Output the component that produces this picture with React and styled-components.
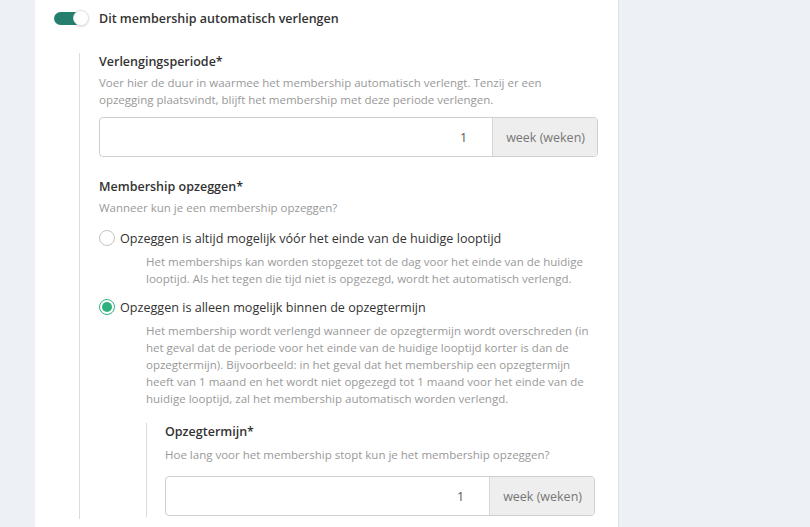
import styled, { createGlobalStyle } from "styled-components";

const Global = createGlobalStyle`
  html, body {
    margin: 0;
    padding: 0;
    background: #edf0f4;
  }
  body {
    font-family: "Open Sans", "Liberation Sans", sans-serif;
    -webkit-font-smoothing: antialiased;
  }
`;

const Page = styled.div`
  display: flex;
  height: 527px;
  overflow: hidden;
  background: #edf0f4;
`;

const Panel = styled.div`
  box-sizing: border-box;
  width: 584px;
  margin-left: 35px;
  padding: 9px 20px 0 19px;
  background: #fff;
  border-right: 1px solid #dcdfe3;
`;

const ToggleRow = styled.label`
  display: flex;
  align-items: center;
  gap: 10px;
  height: 18px;
  font-size: 12.5px;
  font-weight: 600;
  color: #333;
`;

const Switch = styled.span`
  display: inline-flex;
  align-items: center;
  width: 35px;
`;

const Track = styled.span`
  width: 28px;
  height: 13px;
  border-radius: 7px;
  background: #267e6e;
`;

const Knob = styled.span`
  box-sizing: border-box;
  width: 16px;
  height: 16px;
  margin-left: -9px;
  border-radius: 50%;
  background: #fff;
  border: 1px solid #e2e2e2;
  box-shadow: 0 1px 2px rgba(0, 0, 0, 0.12);
`;

const Fieldset = styled.div`
  margin-top: ${(p) => p.$top || 0}px;
  margin-left: ${(p) => p.$indent}px;
  margin-right: ${(p) => p.$right || 0}px;
  padding-left: ${(p) => p.$pad}px;
  padding-bottom: ${(p) => p.$bottom || 0}px;
  border-left: 1px solid #dcdcdc;
`;

const Title = styled.div`
  margin-top: ${(p) => p.$top || 0}px;
  font-size: 12.5px;
  line-height: 18px;
  font-weight: 600;
  color: #333;
`;

const Help = styled.div`
  margin-top: ${(p) => p.$top || 3}px;
  font-size: 11.5px;
  line-height: 17px;
  color: #999;
`;

const InputGroup = styled.div`
  display: flex;
  box-sizing: border-box;
  height: 40px;
  margin-top: ${(p) => p.$top || 9}px;
  border: 1px solid #cfcfcf;
  border-radius: 4px;
  overflow: hidden;
  font-size: 12.5px;
`;

const NumberField = styled.div`
  flex: 1;
  display: flex;
  align-items: center;
  justify-content: flex-end;
  padding-right: 25px;
  color: #555;
`;

const Addon = styled.div`
  flex-shrink: 0;
  display: flex;
  align-items: center;
  padding: 0 12px 0 13px;
  white-space: nowrap;
  background: #eeeeee;
  border-left: 1px solid #d6d6d6;
  color: #777;
`;

const RadioRow = styled.label`
  display: flex;
  align-items: center;
  gap: 5px;
  height: 18px;
  margin-top: ${(p) => p.$top}px;
  font-size: 12.6px;
  color: #333;
`;

const Radio = styled.span`
  box-sizing: border-box;
  display: flex;
  align-items: center;
  justify-content: center;
  width: 16px;
  height: 16px;
  border-radius: 50%;
  border: 1px solid ${(p) => (p.$checked ? "#35b383" : "#c4c4c4")};
  background: #fff;

  &::after {
    content: "";
    display: ${(p) => (p.$checked ? "block" : "none")};
    width: 10px;
    height: 10px;
    border-radius: 50%;
    background: #2fb07e;
  }
`;

const OptionBody = styled.div`
  margin-top: 6px;
  padding-left: 47px;
`;

const UnitInput = ({ value, unit, top }) => (
  <InputGroup $top={top}>
    <NumberField>{value}</NumberField>
    <Addon>{unit}</Addon>
  </InputGroup>
);

export default function App() {
  return (
    <>
      <Global />
      <Page>
        <Panel>
          <ToggleRow>
            <Switch>
              <Track />
              <Knob />
            </Switch>
            Dit membership automatisch verlengen
          </ToggleRow>

          <Fieldset $top={26} $indent={25} $pad={19} $bottom={2}>
            <Title>Verlengingsperiode*</Title>
            <Help>
              Voer hier de duur in waarmee het membership automatisch verlengt. Tenzij er een
              opzegging plaatsvindt, blijft het membership met deze periode verlengen.
            </Help>
            <UnitInput value="1" unit="week (weken)" />

            <Title $top={21}>Membership opzeggen*</Title>
            <Help>Wanneer kun je een membership opzeggen?</Help>

            <RadioRow $top={13}>
              <Radio />
              Opzeggen is altijd mogelijk vóór het einde van de huidige looptijd
            </RadioRow>
            <OptionBody>
              <Help $top={0}>
                Het memberships kan worden stopgezet tot de dag voor het einde van de huidige
                looptijd. Als het tegen die tijd niet is opgezegd, wordt het automatisch verlengd.
              </Help>
            </OptionBody>

            <RadioRow $top={11}>
              <Radio $checked />
              Opzeggen is alleen mogelijk binnen de opzegtermijn
            </RadioRow>
            <OptionBody>
              <Help $top={0}>
                Het membership wordt verlengd wanneer de opzegtermijn wordt overschreden (in
                het geval dat de periode voor het einde van de huidige looptijd korter is dan de
                opzegtermijn). Bijvoorbeeld: in het geval dat het membership een opzegtermijn
                heeft van 1 maand en het wordt niet opgezegd tot 1 maand voor het einde van de
                huidige looptijd, zal het membership automatisch worden verlengd.
              </Help>
              <Fieldset $top={16} $indent={0} $pad={18} $right={3} $bottom={1}>
                <Title>Opzegtermijn*</Title>
                <Help $top={5}>Hoe lang voor het membership stopt kun je het membership opzeggen?</Help>
                <UnitInput value="1" unit="week (weken)" top={13} />
              </Fieldset>
            </OptionBody>
          </Fieldset>
        </Panel>
      </Page>
    </>
  );
}
